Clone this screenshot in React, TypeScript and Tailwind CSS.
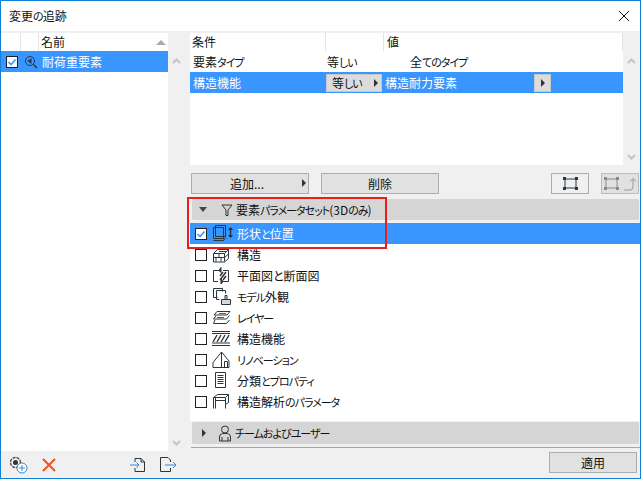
import type { ReactNode } from 'react';

const FONT = 'font-["Noto_Sans_CJK_JP","Liberation_Sans",sans-serif] [font-feature-settings:"palt"]';

// kana in the reference's UI font runs much narrower than the kanji
function K({ children }: { children: ReactNode }) {
  return <span className="text-[11px] tracking-[-1px]">{children}</span>;
}

function Check({ checked }: { checked?: boolean }) {
  return (
    <span className="flex h-[12px] w-[12px] shrink-0 items-center justify-center border border-[#222] bg-white">
      {checked && (
        <svg width="10" height="10" viewBox="0 0 10 10" fill="none">
          <path d="M1.5 5l2.5 2.500L8.500 2.500" stroke="#3a96ff" strokeWidth="1.600" />
        </svg>
      )}
    </span>
  );
}

function Arrow({ className = '' }: { className?: string }) {
  return (
    <svg width="6" height="8" viewBox="0 0 6 8" className={className}>
      <path d="M1 0l4 4-4 4z" fill="#333" />
    </svg>
  );
}

function Scrollbar() {
  return (
    <div className="flex w-[16px] shrink-0 flex-col items-center justify-between bg-[#f0f0f0] pb-[5px] pt-[25px]">
      <svg width="9" height="6" viewBox="0 0 9 6" fill="none">
        <path d="M1 5l3.500-3.500L8 5" stroke="#c4c4c4" strokeWidth="2" />
      </svg>
      <svg width="9" height="6" viewBox="0 0 9 6" fill="none">
        <path d="M1 1l3.500 3.500L8 1" stroke="#c4c4c4" strokeWidth="2" />
      </svg>
    </div>
  );
}

const stroke = '#2b353c';

const icons: Record<string, ReactNode> = {
  shape: (
    <g fill="none" stroke={stroke} strokeWidth="1">
      <path d="M3.500 0.500h10v11h-10z" />
      <path d="M1.500 2.500h10v11h-10z" />
      <path d="M1.500 15.500h10l2-3" />
      <path d="M18.500 3v9" strokeWidth="1.500" />
      <path d="M16.500 5l2-2.500 2 2.500M16.500 10l2 2.500 2-2.500" fill="#2b353c" />
    </g>
  ),
  structure: (
    <g fill="none" stroke={stroke} strokeWidth="1">
      <path d="M1.500 7.500l4-4 h11v9l-4 3.500h-11z" />
      <path d="M1.500 7.500h11v8M12.500 7.500l4-4M1.500 11.500h11M7 7.500v4M4 11.500v4M9 11.500v4M12.500 11.500l4-3.500M7 5.500h7" />
    </g>
  ),
  plan: (
    <g fill="none" stroke={stroke} strokeWidth="1">
      <path d="M1.500 3.500h6M11 3.500h5.500v11h-6M6 14.500h-4.500v-11" />
      <path d="M9 0.500v5l-2-2zM9 12v5l2-2.500z" fill="#2b353c" />
      <path d="M8 13l6-8M11 13l3-4M8 9l3-4" strokeWidth="1.500" />
    </g>
  ),
  appearance: (
    <g fill="none" stroke={stroke} strokeWidth="1">
      <path d="M5.500 9.500h-4v-9h9v3" />
      <path d="M7.500 11.500h-3v-9h9v3" />
      <path d="M9.500 16.500v-5h9v5zM13 11.500v-4h2v4" fill="#2b353c" fillOpacity="0.2" />
    </g>
  ),
  layer: (
    <g fill="none" stroke={stroke} strokeWidth="1">
      <path d="M5 2.500h13l-3 3.500h-13zM4 7l-2.500 3h13l3-3.500M3 11l-1.500 3.500h13l3-3.500" />
      <path d="M7 4.500h7M5 8.500h7" strokeWidth="0.800" />
    </g>
  ),
  fn: (
    <g fill="none" stroke={stroke}>
      <path d="M0 1.500h18M0 3.500h18M0 13h18M0 15.500h18" strokeWidth="1.200" />
      <path d="M1 12l4-7M5 12l4-7M9 12l4-7M13 12l4-7" strokeWidth="1.400" />
    </g>
  ),
  renovation: (
    <g fill="none" stroke={stroke} strokeWidth="1">
      <path d="M1 16.500v-5l8.500-10.500 7.500 9v6.500h-16" />
      <path d="M9.500 1v15.500M12.500 16.500v-6h3v6" />
    </g>
  ),
  doc: (
    <g fill="none" stroke={stroke} strokeWidth="1">
      <path d="M3.500 0.500h10v15h-10z" />
      <path d="M5.500 3.500h6M5.500 5.500h6M5.500 7.500h6M5.500 9.500h6M5.500 11.500h6" />
    </g>
  ),
  analysis: (
    <g fill="none" stroke={stroke} strokeWidth="1">
      <path d="M1.500 15.500v-11l4-3h11v8l-3 2v4M1.500 4.500h12v7M3.500 7.500h10M3.500 4.500v11M13.500 4.500l3-3" />
    </g>
  ),
};

function Icon({ name }: { name: string }) {
  return (
    <svg width="21" height="17" viewBox="0 0 21 17" className="shrink-0">
      {icons[name]}
    </svg>
  );
}

const params: { icon: string; label: ReactNode }[] = [
  { icon: 'structure', label: '構造' },
  { icon: 'plan', label: '平面図と断面図' },
  { icon: 'appearance', label: <><K>モデル</K>外観</> },
  { icon: 'layer', label: <K>レイヤー</K> },
  { icon: 'fn', label: '構造機能' },
  { icon: 'renovation', label: <K>リノベーション</K> },
  { icon: 'doc', label: <>分類<K>とプロパティ</K></> },
  { icon: 'analysis', label: <>構造解析<K>のパラメータ</K></> },
];

function ParamRow({ icon, label }: { icon: string; label: ReactNode }) {
  return (
    <div className="flex h-[21px] items-center pl-[5px]">
      <Check />
      <span className="ml-[5px] flex w-[25px] justify-start">
        <Icon name={icon} />
      </span>
      <span className="whitespace-nowrap">{label}</span>
    </div>
  );
}

function Button({ className = '', children }: { className?: string; children: ReactNode }) {
  return (
    <div className={`flex h-[21px] shrink-0 items-center justify-center border border-[#adadad] bg-[#e1e1e1] ${className}`}>
      {children}
    </div>
  );
}

export default function App() {
  return (
    <div className={`${FONT} relative flex h-[479px] w-[641px] flex-col overflow-hidden border border-[#0f80d8] bg-[#f0f0f0] text-[12px] leading-none text-[#111]`}>
      <div className="flex h-[30px] shrink-0 items-center justify-between bg-white pl-[8px] pr-[5px]">
        <span>変更<K>の</K>追跡</span>
        <svg width="12" height="12" viewBox="0 0 12 12" className="mr-[5px]" fill="none">
          <path d="M1 1l10 10M11 1L1 11" stroke="#111" strokeWidth="1" />
        </svg>
      </div>

      <div className="flex min-h-0 flex-1 pt-[2px]">
        {/* left list */}
        <div className="flex w-[183px] shrink-0 flex-col">
          <div className="flex min-h-0 flex-1">
            <div className="flex w-[167px] flex-col bg-white">
              <div className="flex h-[18px] shrink-0 items-center">
                <span className="h-full w-[20px] border-r border-[#e5e5e5]" />
                <span className="h-full w-[18px] border-r border-[#e5e5e5]" />
                <span className="flex-1 pl-[2px]">名前</span>
                <svg width="10" height="6" viewBox="0 0 10 6" className="mr-[2px]">
                  <path d="M0 6l5-5 5 5z" fill="#aaa" />
                </svg>
              </div>
              <div className="flex h-[21px] items-center bg-[#3a96ff] pl-[5px] text-white">
                <Check checked />
                <svg width="14" height="14" viewBox="0 0 14 14" className="ml-[6px]" fill="none">
                  <circle cx="6" cy="6" r="4.500" stroke="#24384c" />
                  <path d="M9.500 9.500L13 13" stroke="#24384c" strokeWidth="1.500" />
                  <path d="M3.500 6L7.500 3v6z" fill="#24384c" />
                </svg>
                <span className="ml-[4px]">耐荷重要素</span>
              </div>
            </div>
            <Scrollbar />
          </div>
          <div className="flex h-[27px] shrink-0 items-center pl-[8px]">
            <svg width="19" height="18" viewBox="0 0 19 18" fill="none">
              <circle cx="6.500" cy="6.500" r="5" stroke="#555" strokeWidth="1.500" strokeDasharray="3 1" />
              <circle cx="6.500" cy="6.500" r="2.500" fill="#333" />
              <circle cx="13" cy="12" r="5" fill="#fff" stroke="#3a86d8" />
              <path d="M13 9v6M10 12h6" stroke="#3a86d8" />
            </svg>
            <svg width="14" height="14" viewBox="0 0 14 14" className="ml-[14px]" fill="none">
              <path d="M1 1l12 12M13 1L1 13" stroke="#f4511e" strokeWidth="2" />
            </svg>
            <svg width="16" height="16" viewBox="0 0 16 16" className="ml-[74px]" fill="none">
              <path d="M5 5V1.500h6l3.500 3.500v9.500h-9.500V11M11 1.500v3.500h3.500" stroke="#2b353c" />
              <path d="M0 8h9M6.500 5.500L9 8l-2.500 2.500" stroke="#3a86d8" />
            </svg>
            <svg width="18" height="16" viewBox="0 0 18 16" className="ml-[13px]" fill="none">
              <path d="M11.500 5V3L9 0.500H1.500v14h10V11" stroke="#2b353c" />
              <path d="M6 8h11M14 5l3 3-3 3" stroke="#3a86d8" />
            </svg>
          </div>
        </div>

        {/* right side */}
        <div className="ml-[6px] flex min-w-0 flex-1 flex-col">
          <div className="flex h-[132px] shrink-0">
            <div className="flex w-[433px] flex-col bg-white">
              <div className="flex h-[18px] shrink-0 items-center">
                <span className="h-full w-[136px] border-r border-[#e5e5e5] pl-[2px] pt-[3px]">条件</span>
                <span className="h-full w-[58px] border-r border-[#e5e5e5]" />
                <span className="h-full flex-1 border-r border-[#e5e5e5] pl-[3px] pt-[3px]">値</span>
              </div>
              <div className="flex h-[21px] shrink-0 items-center">
                <span className="w-[137px] pl-[3px]">要素<K>タイプ</K></span>
                <span className="w-[83px]">等<K>しい</K></span>
                <span>全<K>てのタイプ</K></span>
              </div>
              <div className="flex h-[21px] shrink-0 items-center bg-[#3a96ff] text-white">
                <span className="w-[136px] pl-[3px]">構造機能</span>
                <span className="flex h-[18px] w-[56px] items-center border border-[#c8c8c8] bg-[#dcdcdc] pl-[5px] text-[#111]">
                  <span>等<K>しい</K></span>
                  <Arrow className="ml-auto mr-[2px]" />
                </span>
                <span className="ml-[3px] w-[149px]">構造耐力要素</span>
                <span className="flex h-[18px] w-[17px] items-center justify-center border border-[#c8c8c8] bg-[#dcdcdc]">
                  <Arrow />
                </span>
              </div>
            </div>
            <Scrollbar />
          </div>

          {/* buttons */}
          <div className="mt-[8px] flex shrink-0 pl-[1px]">
            <Button className="relative w-[118px]">
              <span className="-ml-[6px]">追加...</span>
              <Arrow className="absolute right-[1px] top-[5px]" />
            </Button>
            <Button className="ml-[12px] w-[118px]">削除</Button>
            <Button className="ml-[112px] w-[38px] bg-[#f0f0f0]">
              <svg width="15" height="13" viewBox="0 0 15 13" fill="none">
                <path d="M2 2h11v9H2z" stroke="#2b353c" />
                <path d="M0 0h3v3H0zM12 0h3v3h-3zM0 10h3v3H0zM12 10h3v3h-3z" fill="#2b353c" />
              </svg>
            </Button>
            <Button className="ml-[12px] w-[38px] border-[#bcbcbc] bg-[#c9c9c9]">
              <svg width="36" height="15" viewBox="0 0 36 15" fill="none">
                <path d="M4 3h11v9H4z" stroke="#888" />
                <path d="M2 1h3v3H2zM14 1h3v3h-3zM2 11h3v3H2zM14 11h3v3h-3z" fill="#888" />
                <path d="M22 14h6q3 0 3-3V3M28 5.500L31 2.500l3 3" stroke="#999" />
              </svg>
            </Button>
          </div>

          {/* element parameter sets */}
          <div className="ml-[2px] mr-[1px] mt-[5px] flex h-[21px] shrink-0 items-center rounded-[2px] bg-[#d5d5d5] pl-[7px]">
            <svg width="8" height="5" viewBox="0 0 8 5">
              <path d="M0 0h8L4 5z" fill="#444" />
            </svg>
            <svg width="12" height="12" viewBox="0 0 12 12" className="ml-[14px]" fill="none">
              <path d="M1 1h10L7 6v5.500H5V6z" stroke="#333" />
            </svg>
            <span className="ml-[3px]">要素<K>パラメータセット</K>(3D<K>のみ</K>)</span>
          </div>
          <div className="mt-[3px] h-[198px] shrink-0 bg-white">
            <div className="flex h-[21px] items-center bg-[#3a96ff] pl-[5px] text-white">
              <Check checked />
              <span className="ml-[5px] flex w-[25px]">
                <Icon name="shape" />
              </span>
              <span>形状<K>と</K>位置</span>
            </div>
            {params.map((p) => (
              <ParamRow key={p.icon} icon={p.icon} label={p.label} />
            ))}
          </div>

          {/* team and users */}
          <div className="ml-[2px] mr-[1px] mt-[1px] flex h-[22px] shrink-0 items-center rounded-[2px] bg-[#d5d5d5] pl-[9px]">
            <Arrow />
            <svg width="14" height="17" viewBox="0 0 14 17" className="ml-[11px]" fill="none">
              <circle cx="7" cy="4.500" r="3.500" stroke="#333" />
              <path d="M1.500 16v-4q0-3 3-3.500h5q3 .5 3 3.500v4zM4 16v-4M10 16v-4" stroke="#333" />
            </svg>
            <span className="ml-[3px]"><K>チームおよびユーザー</K></span>
          </div>
          <div className="ml-[1px] mt-[3px] h-px shrink-0 bg-[#a5a5a5]" />
          <div className="flex flex-1 items-start justify-end pr-[3px] pt-[4px]">
            <Button className="w-[88px]">適用</Button>
          </div>
        </div>
      </div>

      {/* red highlight callout */}
      <div className="pointer-events-none absolute left-[186px] top-[196px] h-[52px] w-[200px] border-2 border-[#e8201c]" />
    </div>
  );
}
